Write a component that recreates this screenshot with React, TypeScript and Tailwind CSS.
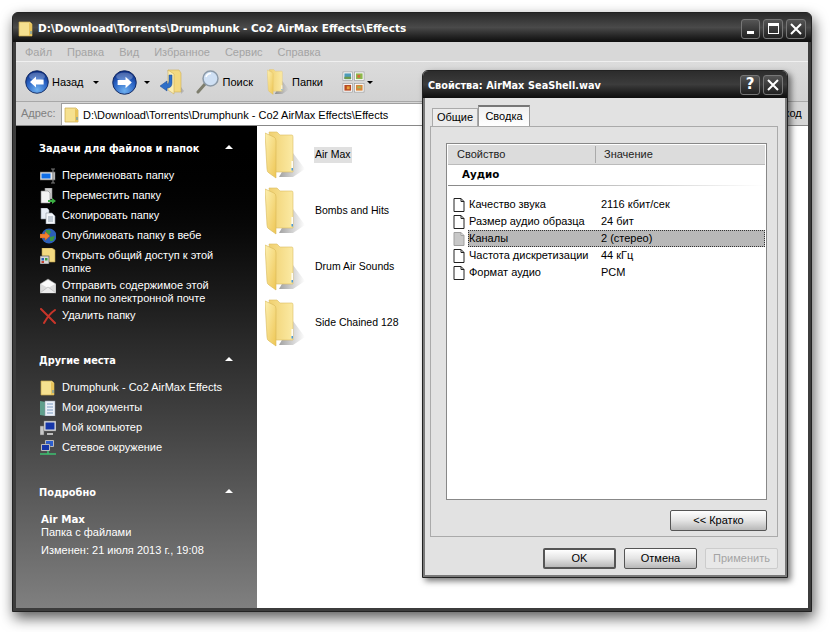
import { ReactNode } from "react";

function FolderIcon({ className }: { className: string }) {
  return (
    <svg viewBox="0 0 40 48" className={className}>
      <defs>
        <linearGradient id="fb" x1="0" y1="0" x2="1" y2="0">
          <stop offset="0" stopColor="#f0d070" />
          <stop offset="1" stopColor="#fbeaa4" />
        </linearGradient>
        <linearGradient id="ff" x1="0" y1="0" x2="1" y2="1">
          <stop offset="0" stopColor="#fdf0b0" />
          <stop offset="1" stopColor="#eec655" />
        </linearGradient>
        <linearGradient id="fs" x1="0" y1="0" x2="1" y2="0">
          <stop offset="0" stopColor="#555" stopOpacity=".55" />
          <stop offset="1" stopColor="#555" stopOpacity="0" />
        </linearGradient>
      </defs>
      <path d="M28 22 L40 38 L28 46 L14 46 Z" fill="url(#fs)" />
      <path d="M4 1 L12 1 L15 4 L27 4 Q28 4 28 6 L28 41 L9 41 Z" fill="url(#fb)" stroke="#dcbd62" strokeWidth=".6" />
      <path d="M0 2 L9 6 Q11 7 11 10 L11 47 L4 42 Q2 41 2 38 Z" fill="url(#ff)" stroke="#d9b858" strokeWidth=".6" />
      <rect x="26.5" y="30" width="1.4" height="9" fill="#fff" />
      <rect x="26.5" y="37" width="1.4" height="2.5" fill="#3e8fd0" />
    </svg>
  );
}

function SmallFolder() {
  return (
    <svg viewBox="0 0 16 16" className="w-[16px] h-[16px]">
      <path d="M1 1 H12 L14 3 V15 H1 Z" fill="#f6e190" stroke="#c9a94f" strokeWidth=".7" />
      <path d="M11 2 L14 3 V15 H11 Z" fill="#e8c45c" />
      <rect x="12.5" y="10" width="1" height="3" fill="#4a90c8" />
    </svg>
  );
}

function RoundArrow({ dir, className }: { dir: "left" | "right"; className: string }) {
  const id = "ball" + dir;
  return (
    <svg viewBox="0 0 24 24" className={className}>
      <defs>
        <radialGradient id={id} cx=".5" cy=".85" r=".8">
          <stop offset="0" stopColor="#6fb1f0" />
          <stop offset=".6" stopColor="#2a63c4" />
          <stop offset="1" stopColor="#0c2f86" />
        </radialGradient>
      </defs>
      <circle cx="12" cy="12" r="11.3" fill={`url(#${id})`} stroke="#12285e" strokeWidth=".9" />
      <ellipse cx="12" cy="6.4" rx="8" ry="4" fill="#fff" opacity=".25" />
      <path
        d={dir === "left" ? "M5 12 L11 6.4 V9.6 H18.6 V14.4 H11 V17.6 Z" : "M19 12 L13 6.4 V9.6 H5.4 V14.4 H13 V17.6 Z"}
        fill="#fff"
      />
    </svg>
  );
}

function Caret() {
  return <span className="inline-block w-0 h-0 border-x-[3px] border-x-transparent border-t-[3px] border-t-black" />;
}

function UpIcon() {
  return (
    <svg viewBox="0 0 24 26" className="w-[24px] h-[26px]">
      <path d="M8 1 H19 L21 4 V23 H12 Z" fill="#f3d980" stroke="#cfae57" strokeWidth=".6" />
      <path d="M8 1 L14 5 V25 L8 21 Z" fill="#fbeeb4" stroke="#cfae57" strokeWidth=".6" />
      <path d="M12 6 V14 Q12 19 7 19 V22 L0 17 L7 12 V15 Q9 15 9 12 V6 Z" fill="#2f6fc8" stroke="#184a94" strokeWidth=".5" />
      <path d="M21 18 L24 22 L21 25 Z" fill="#000" opacity=".15" />
    </svg>
  );
}

function SearchIcon() {
  return (
    <svg viewBox="0 0 24 24" className="w-[24px] h-[24px]">
      <path d="M9 14 L2 22" stroke="#7d7d6d" strokeWidth="3" strokeLinecap="round" />
      <circle cx="14.5" cy="8.5" r="7.5" fill="#cfe0f4" stroke="#8c9aa8" strokeWidth="1.5" />
      <path d="M10 7 A5 5 0 0 1 15 3.5" stroke="#fff" strokeWidth="1.5" fill="none" />
    </svg>
  );
}

function ViewsIcon() {
  return (
    <svg viewBox="0 0 24 24" className="w-[23px] h-[23px]">
      <rect x="1" y="1" width="10" height="9" fill="#fff" stroke="#9a9a9a" strokeWidth=".7" />
      <rect x="2.5" y="2.5" width="7" height="6" fill="#4e9bb8" />
      <rect x="2.5" y="6" width="7" height="2.5" fill="#6d9a4e" />
      <rect x="13" y="1" width="10" height="9" fill="#fff" stroke="#9a9a9a" strokeWidth=".7" />
      <rect x="14.5" y="2.5" width="7" height="6" fill="#8cb84e" />
      <rect x="16" y="4" width="3" height="3" fill="#d86a3a" />
      <rect x="1" y="13" width="10" height="9" fill="#fff" stroke="#9a9a9a" strokeWidth=".7" />
      <rect x="2.5" y="14.5" width="7" height="6" fill="#b84a22" />
      <rect x="5" y="16" width="3" height="3" fill="#e8a23a" />
      <rect x="13" y="13" width="10" height="9" fill="#fff" stroke="#9a9a9a" strokeWidth=".7" />
      <rect x="14.5" y="14.5" width="7" height="6" fill="#d8863a" />
      <rect x="16" y="16" width="4" height="2" fill="#a0b85a" />
    </svg>
  );
}

const taskIcons: Record<string, ReactNode> = {
  rename: (
    <svg viewBox="0 0 16 16" className="w-[16px] h-[16px]">
      <rect x="0" y="4" width="15" height="8" fill="#e8e8e8" stroke="#555" strokeWidth=".7" />
      <rect x="1.5" y="5.5" width="9" height="5" fill="#0f6ee8" />
      <path d="M11 1 H15 M13 1 V15 M11 15 H15" stroke="#777" strokeWidth="1.2" />
    </svg>
  ),
  move: (
    <svg viewBox="0 0 16 16" className="w-[16px] h-[16px]">
      <path d="M5 0 H12 V11 H5 Z" fill="#cfcfcf" stroke="#888" strokeWidth=".6" />
      <path d="M1 3 H8 L10 5 V15 H1 Z" fill="#f4f4f4" stroke="#888" strokeWidth=".6" />
      <path d="M8 12 H12 V10 L16 13 L12 16 V14 H8 Z" fill="#3cb043" />
    </svg>
  ),
  copy: (
    <svg viewBox="0 0 16 16" className="w-[16px] h-[16px]">
      <path d="M1 0 H7 L9 2 V11 H1 Z" fill="#e8eef6" stroke="#8a94a0" strokeWidth=".6" />
      <path d="M6 5 H12 L15 8 V16 H6 Z" fill="#f4f7fb" stroke="#8a94a0" strokeWidth=".6" />
      <path d="M8 9 H13 M8 11 H13 M8 13 H13" stroke="#7a8aa0" strokeWidth=".8" />
    </svg>
  ),
  web: (
    <svg viewBox="0 0 16 16" className="w-[16px] h-[16px]">
      <circle cx="9" cy="8" r="7.5" fill="#2c5fb8" />
      <path d="M6 2 Q10 1 11 4 L9 7 L6 6 Z M10 9 L15 8 L13 13 L10 13 Z" fill="#3c9a42" />
      <path d="M0 6 H5 V3.5 L10 8 L5 12.5 V10 H0 Z" fill="#f08030" stroke="#b85010" strokeWidth=".4" />
    </svg>
  ),
  share: (
    <svg viewBox="0 0 16 16" className="w-[16px] h-[16px]">
      <path d="M2 0 H12 L15 2 V14 H2 Z" fill="#f3d980" stroke="#b89a48" strokeWidth=".6" />
      <rect x="0" y="8" width="9" height="8" fill="#d8d8d8" stroke="#444" strokeWidth=".6" />
      <rect x="1.5" y="10" width="2.5" height="2.5" fill="#2c5fb8" />
      <rect x="5" y="10" width="2.5" height="2.5" fill="#3c9a42" />
      <rect x="1.5" y="13" width="2.5" height="2" fill="#c04030" />
    </svg>
  ),
  mail: (
    <svg viewBox="0 0 16 16" className="w-[16px] h-[16px]">
      <path d="M0 6 L8 1 L16 6 V15 H0 Z" fill="#dcdcdc" stroke="#999" strokeWidth=".5" />
      <path d="M1 6 L8 10 L15 6 L8 2 Z" fill="#fbfbfb" />
      <path d="M0 15 L8 9 L16 15" fill="#ececec" stroke="#a8a8a8" strokeWidth=".5" />
    </svg>
  ),
  del: (
    <svg viewBox="0 0 16 16" className="w-[16px] h-[16px]">
      <path d="M1 1 L15 15 M15 2 Q9 6 4 15" stroke="#c8352a" strokeWidth="2" fill="none" strokeLinecap="round" />
    </svg>
  ),
  docs: (
    <svg viewBox="0 0 16 16" className="w-[16px] h-[16px]">
      <path d="M0 1 L6 2 V16 L0 15 Z" fill="#5f9f8c" />
      <rect x="5" y="1" width="10" height="15" fill="#eaf0f8" stroke="#8a94a0" strokeWidth=".5" />
      <path d="M7 4 H13 M7 7 H13 M7 10 H13 M7 13 H13" stroke="#7a9ac0" strokeWidth="1" />
    </svg>
  ),
  pc: (
    <svg viewBox="0 0 16 16" className="w-[16px] h-[16px]">
      <rect x="0" y="6" width="4" height="9" fill="#c8c8c8" stroke="#666" strokeWidth=".5" />
      <rect x="4" y="1" width="12" height="10" fill="#dcdcdc" stroke="#777" strokeWidth=".5" />
      <rect x="5.5" y="2.5" width="9" height="7" fill="#1636a8" />
      <path d="M7 13 H13 V15 H7 Z" fill="#bdbdbd" />
    </svg>
  ),
  net: (
    <svg viewBox="0 0 16 16" className="w-[16px] h-[16px]">
      <rect x="5" y="0" width="9" height="7" fill="#dcdcdc" stroke="#555" strokeWidth=".5" />
      <rect x="6" y="1" width="7" height="5" fill="#2c5fd0" />
      <rect x="1" y="4" width="9" height="7" fill="#dcdcdc" stroke="#555" strokeWidth=".5" />
      <rect x="2" y="5" width="7" height="5" fill="#1636a8" />
      <path d="M0 14 H16 M8 11 V14" stroke="#3cc070" strokeWidth="1.6" />
    </svg>
  ),
};

const boldFont = "font-['DejaVu_Sans',sans-serif] font-bold";

function Task({ icon, children, wrapped }: { icon: ReactNode; children: ReactNode; wrapped?: boolean }) {
  return (
    <div className={"flex pt-[3px] pl-[24px] text-white leading-[13px] " + (wrapped ? "pb-[1px]" : "pb-[4px]")}>
      <div className="w-[22px] shrink-0 h-[13px] flex items-center">{icon}</div>
      <div>{children}</div>
    </div>
  );
}

function SideHeading({ title, className }: { title: string; className: string }) {
  return (
    <div className={"flex items-center h-[20px] pl-[23px] pr-[24px] justify-between text-[9.8px] text-white " + boldFont + " " + className}>
      <span>{title}</span>
      <span className="w-0 h-0 border-x-[4px] border-x-transparent border-b-[4px] border-b-white mb-[4px]" />
    </div>
  );
}

function XpButton({ label, className }: { label: string; className: string }) {
  return (
    <div
      className={
        "h-[21px] flex items-center justify-center border border-[#555] rounded-[2px] bg-linear-to-b from-white via-[#e4e4e4] to-[#b8b8b8] text-black " +
        className
      }
    >
      {label}
    </div>
  );
}

function CaptionButton({ children, className }: { children: ReactNode; className: string }) {
  return (
    <div className={"h-[20px] flex items-center justify-center border border-[#777] rounded-[3px] bg-linear-to-b from-[#555] to-[#222] " + className}>
      {children}
    </div>
  );
}

function Row({ name, value, selected }: { name: string; value: string; selected?: boolean }) {
  return (
    <div className="flex items-center h-[17px] pl-[5px]">
      <svg viewBox="0 0 12 14" className="w-[12px] h-[14px] shrink-0">
        <path
          d="M1 .5 H8 L11 3.5 V13.5 H1 Z M8 .5 V3.5 H11"
          fill={selected ? "#c8c8c8" : "#fff"}
          stroke={selected ? "#a0a0a0" : "#222"}
          strokeWidth="1"
        />
      </svg>
      <div
        className={
          "flex flex-1 ml-[3px] h-[17px] items-center " +
          (selected ? "bg-[#b8b8b8] border border-dotted border-[#333]" : "border border-transparent")
        }
      >
        <span className="w-[132px]">{name}</span>
        <span>{value}</span>
      </div>
    </div>
  );
}

const folders = ["Air Max", "Bombs and Hits", "Drum Air Sounds", "Side Chained 128"];

export default function App() {
  return (
    <div className="w-[832px] h-[632px] bg-white pt-[12px] pl-[12px] font-['Liberation_Sans',sans-serif] text-[11px] text-black overflow-hidden">
      <div className="relative w-[800px] h-[600px] flex flex-col bg-[#3c3c3c] border border-[#222] rounded-t-[6px] px-[3px] pb-[3px] shadow-[2px_6px_14px_rgba(0,0,0,0.65)]">
        {/* title bar */}
        <div className="h-[29px] -mx-[3px] pl-[5px] pr-[5px] pt-[2px] rounded-t-[5px] flex items-center bg-linear-to-b from-[#2a2a2a] via-[#4a4a4a] to-[#0e0e0e] shrink-0">
          <SmallFolder />
          <span className={"ml-[4px] text-white text-[10.5px] " + boldFont}>
            D:\Download\Torrents\Drumphunk - Co2 AirMax Effects\Effects
          </span>
          <div className="ml-auto flex gap-[3px]">
            <CaptionButton className="w-[19px]">
              <span className="w-[7px] h-[3px] bg-white mt-[8px]" />
            </CaptionButton>
            <CaptionButton className="w-[20px]">
              <span className="w-[11px] h-[11px] border border-white border-t-[3px]" />
            </CaptionButton>
            <CaptionButton className="w-[20px]">
              <svg viewBox="0 0 12 12" className="w-[12px] h-[12px]">
                <path d="M1 1 L11 11 M11 1 L1 11" stroke="#fff" strokeWidth="2" />
              </svg>
            </CaptionButton>
          </div>
        </div>
        {/* menu */}
        <div className="h-[20px] shrink-0 flex items-center gap-[15px] pl-[9px] pt-[1px] bg-[#d8d8d8] border-b border-[#f0f0f0] text-[#a4a4a4]">
          {["Файл", "Правка", "Вид", "Избранное", "Сервис", "Справка"].map((m) => (
            <span key={m}>{m}</span>
          ))}
        </div>
        {/* toolbar */}
        <div className="h-[40px] shrink-0 flex items-center pl-[9px] pt-[1px] bg-linear-to-b from-[#dcdcdc] to-[#d2d2d2] border-b border-[#a8a8a8]">
          <RoundArrow dir="left" className="w-[24px] h-[24px]" />
          <span className="ml-[3px]">Назад</span>
          <span className="ml-[9px] flex"><Caret /></span>
          <RoundArrow dir="right" className="w-[25px] h-[25px] ml-[13px]" />
          <span className="ml-[7px] flex"><Caret /></span>
          <span className="ml-[10px] flex"><UpIcon /></span>
          <span className="ml-[12px] flex"><SearchIcon /></span>
          <span className="ml-[3px]">Поиск</span>
          <span className="ml-[14px] flex"><FolderIcon className="w-[22px] h-[26px]" /></span>
          <span className="ml-[3px]">Папки</span>
          <span className="ml-[19px] flex"><ViewsIcon /></span>
          <span className="ml-[2px] flex"><Caret /></span>
        </div>
        {/* address */}
        <div className="h-[24px] shrink-0 flex items-end bg-[#d6d6d6] pl-[5px] border-b border-[#888]">
          <span className="self-center text-[#808080] w-[40px]">Адрес:</span>
          <div className="w-[695px] h-[22px] bg-white border border-[#a0a0a0] border-b-0 flex items-center pl-[2px] pt-[1px]">
            <SmallFolder />
            <span className="ml-[3px]">D:\Download\Torrents\Drumphunk - Co2 AirMax Effects\Effects</span>
          </div>
          <span className="self-center ml-[2px]">Переход</span>
        </div>
        {/* body */}
        <div className="flex-1 flex min-h-0 bg-white">
          <div className="w-[241px] shrink-0 pt-[13px] bg-linear-to-b from-black via-[#2a2a2a] via-45% to-[#808080]">
            <SideHeading title="Задачи для файлов и папок" className="mb-[7px]" />
            <Task icon={taskIcons.rename}>Переименовать папку</Task>
            <Task icon={taskIcons.move}>Переместить папку</Task>
            <Task icon={taskIcons.copy}>Скопировать папку</Task>
            <Task icon={taskIcons.web}>Опубликовать папку в вебе</Task>
            <Task icon={taskIcons.share} wrapped>Открыть общий доступ к этой<br />папке</Task>
            <Task icon={taskIcons.mail} wrapped>Отправить содержимое этой<br />папки по электронной почте</Task>
            <Task icon={taskIcons.del}>Удалить папку</Task>
            <SideHeading title="Другие места" className="mt-[25px] mb-[7px]" />
            <Task icon={<SmallFolder />}>Drumphunk - Co2 AirMax Effects</Task>
            <Task icon={taskIcons.docs}>Мои документы</Task>
            <Task icon={taskIcons.pc}>Мой компьютер</Task>
            <Task icon={taskIcons.net}>Сетевое окружение</Task>
            <SideHeading title="Подробно" className="mt-[25px] mb-[10px]" />
            <div className="pl-[25px] text-white leading-[13px]">
              <div className={"text-[10.3px] " + boldFont}>Air Max</div>
              <div>Папка с файлами</div>
              <div className="mt-[5px]">Изменен: 21 июля 2013 г., 19:08</div>
            </div>
          </div>
          <div className="flex-1 pt-[1px] text-[10.5px]">
            {folders.map((f, i) => (
              <div key={f} className="flex items-center h-[56px] pl-[8px]">
                <FolderIcon className="w-[40px] h-[48px] shrink-0" />
                <span className={"ml-[9px] px-[1px] " + (i === 0 ? "bg-[#e0e0e0]" : "")}>{f}</span>
              </div>
            ))}
          </div>
        </div>

        {/* properties dialog, floats over the window */}
        <div className="absolute left-[409px] top-[57px] w-[366px] h-[508px] flex flex-col bg-[#e2e2e2] border border-[#222] rounded-t-[6px] shadow-[3px_3px_6px_rgba(0,0,0,0.55)]">
          <div className="h-[27px] shrink-0 rounded-t-[5px] flex items-center pl-[5px] pr-[4px] bg-linear-to-b from-[#2c2c2c] via-[#3c3c3c] to-[#0e0e0e]">
            <span className={"text-white text-[9.7px] whitespace-pre mt-[4px] [word-spacing:-1.5px] " + boldFont}>Свойства:  AirMax  SeaShell.wav</span>
            <div className="ml-auto flex gap-[3px]">
              <CaptionButton className="w-[20px]">
                <span className={"text-white text-[15px] leading-none " + boldFont}>?</span>
              </CaptionButton>
              <CaptionButton className="w-[20px]">
                <svg viewBox="0 0 12 12" className="w-[12px] h-[12px]">
                  <path d="M1 1 L11 11 M11 1 L1 11" stroke="#fff" strokeWidth="2" />
                </svg>
              </CaptionButton>
            </div>
          </div>
          <div className="flex-1 flex flex-col border-x-[2px] border-b-[2px] border-[#7a7a7a] pl-[5px] pr-[7px]">
            <div className="h-[28px] flex items-end pl-[2px] shrink-0">
              <div className="w-[46px] h-[18px] flex items-center justify-center bg-[#ececec] border border-[#aaa] border-b-0">Общие</div>
              <div className="w-[52px] h-[21px] flex items-center justify-center bg-linear-to-b from-[#f0f0f0] to-white border border-[#999] border-t-[2px] border-t-[#777] border-b-0 pb-[1px]">Сводка</div>
            </div>
            <div className="h-[411px] shrink-0 border border-[#aaa] pl-[15px] pr-[10px] pt-[16px] flex flex-col">
              <div className="h-[357px] shrink-0 bg-white border border-[#888] px-[1px] pt-[1px]">
                <div className="h-[20px] flex items-center bg-[#dcdcdc] border-b border-[#bbb] text-[#222]">
                  <span className="w-[148px] pl-[9px] border-r border-[#aaa]">Свойство</span>
                  <span className="pl-[8px]">Значение</span>
                </div>
                <div className={"h-[20px] flex items-center pl-[14px] text-[10.3px] " + boldFont}>Аудио</div>
                <div className="h-[1px] bg-linear-to-r from-[#888] to-white" />
                <div className="mt-[10px]">
                  <Row name="Качество звука" value="2116 кбит/сек" />
                  <Row name="Размер аудио образца" value="24 бит" />
                  <Row name="Каналы" value="2 (стерео)" selected />
                  <Row name="Частота дискретизации" value="44 кГц" />
                  <Row name="Формат аудио" value="PCM" />
                </div>
              </div>
              <div className="flex justify-end mt-[10px]">
                <XpButton label="<< Кратко" className="w-[97px]" />
              </div>
            </div>
            <div className="flex justify-end gap-[8px] mt-[11px]">
              <XpButton label="OK" className="w-[73px] border-[#222] border-[2px]" />
              <XpButton label="Отмена" className="w-[73px]" />
              <div className="w-[73px] h-[21px] flex items-center justify-center border border-[#ccc] rounded-[2px] bg-[#e8e8e8] text-[#a4a4a4]">Применить</div>
            </div>
          </div>
        </div>
      </div>
    </div>
  );
}
